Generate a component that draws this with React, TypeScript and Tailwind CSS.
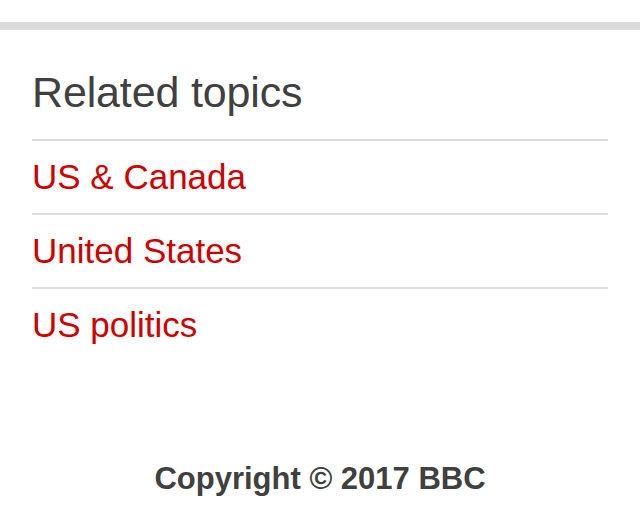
export default function App() {
  const links = ["US & Canada", "United States", "US politics"];
  return (
    <div className="w-[640px] h-[511px] bg-white overflow-hidden" style={{ fontFamily: '"Liberation Sans", Arial, sans-serif' }}>
      <div className="h-[22px]" />
      <div className="h-[8px] bg-[#dbdbdb]" />
      <section className="px-8">
        <h2 className="pt-[38px] mb-[23px] text-[43px] leading-[48px] text-[#404040] font-normal tracking-[-0.15px]">
          Related topics
        </h2>
        <ul>
          {links.map((l) => (
            <li key={l} className="border-t-2 border-[#dcdcdc] h-[74px] flex items-center">
              <a className="text-[35px] leading-[40px] text-[#cc0000]">{l}</a>
            </li>
          ))}
        </ul>
      </section>
      <footer className="mt-[100px] text-center text-[31px] leading-[36px] font-bold text-[#404040]">
        Copyright © 2017 BBC
      </footer>
    </div>
  );
}
